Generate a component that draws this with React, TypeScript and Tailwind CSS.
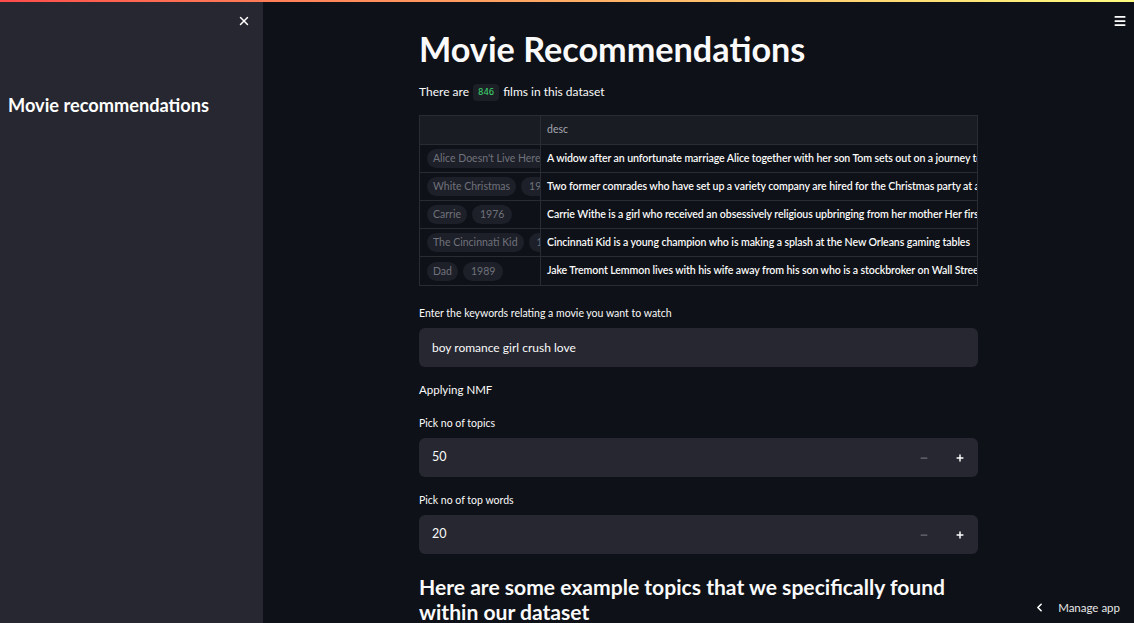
import { X, Menu, ChevronLeft, Minus, Plus } from "lucide-react";

const rows = [
  { title: "Alice Doesn't Live Here Anymore", year: "1974", desc: "A widow after an unfortunate marriage Alice together with her son Tom sets out on a journey to Monterey" },
  { title: "White Christmas", year: "1954", desc: "Two former comrades who have set up a variety company are hired for the Christmas party at a hotel" },
  { title: "Carrie", year: "1976", desc: "Carrie Withe is a girl who received an obsessively religious upbringing from her mother Her first period" },
  { title: "The Cincinnati Kid", year: "1965", desc: "Cincinnati Kid is a young champion who is making a splash at the New Orleans gaming tables" },
  { title: "Dad", year: "1989", desc: "Jake Tremont Lemmon lives with his wife away from his son who is a stockbroker on Wall Street" },
];

const font = { fontFamily: '"Source Sans Pro", Lato, "Noto Sans", sans-serif' };

function NumberInput({ label, value }: { label: string; value: string }) {
  return (
    <div className="mt-[14px]">
      <p className="text-[10.5px] text-[#fafafa] h-[18px] leading-[18px]">{label}</p>
      <div className="mt-[6px] flex h-[39px] rounded-md bg-[#262730]">
        <div className="flex-1 flex items-center px-[13px] text-[12.5px] text-[#fafafa]">{value}</div>
        <div className="w-[36px] flex items-center justify-center text-[#6c6e78]">
          <Minus size={10} strokeWidth={3} />
        </div>
        <div className="w-[36px] flex items-center justify-center text-white">
          <Plus size={10} strokeWidth={3.5} />
        </div>
      </div>
    </div>
  );
}

export default function App() {
  return (
    <div className="h-[623px] w-[1134px] overflow-hidden bg-[#0e1117] text-[#fafafa] flex flex-col" style={font}>
      <div className="h-[2px] w-full bg-gradient-to-r from-[#ff4b4b] to-[#fffd80]" />
      <div className="flex flex-1 min-h-0 relative">
        {/* Sidebar */}
        <aside className="w-[263px] shrink-0 bg-[#262730] relative">
          <X className="absolute left-[237px] top-[12px] text-white" size={14} strokeWidth={2.5} />
          <h2 className="mt-[90px] ml-[8px] text-[18.2px] font-bold text-white leading-[26px]">Movie recommendations</h2>
        </aside>

        {/* Main */}
        <main className="flex-1 flex justify-center relative">
          <Menu className="absolute right-[7px] top-[12px] text-white" size={14} strokeWidth={3} />
          <div className="w-[559px] pt-[25px]">
            <h1 className="text-[34.2px] font-bold leading-[44px]">Movie Recommendations</h1>
            <p className="mt-[11px] h-[20px] text-[12px] leading-[20px] flex items-center">
              There are
              <code className="mx-[4px] px-[5px] h-[17px] leading-[17px] rounded bg-[#1c1f26] text-[#3dd56d] text-[9px]" style={{ fontFamily: '"DejaVu Sans Mono", monospace' }}>846</code>
              films in this dataset
            </p>

            {/* Table */}
            <div className="mt-[13px] border border-[#2a2c34]">
              <div className="flex h-[29px] bg-[#1a1c23] border-b border-[#2a2c34]">
                <div className="w-[121px] shrink-0 border-r border-[#2a2c34]" />
                <div className="flex-1 flex items-center px-[6px] text-[#a3a6ae] text-[10.5px]">desc</div>
              </div>
              {rows.map((r, i) => (
                <div key={r.title} className={`flex h-[28px] ${i < rows.length - 1 ? "border-b border-[#2a2c34]" : ""}`}>
                  <div className="w-[121px] shrink-0 border-r border-[#2a2c34] overflow-hidden flex items-center gap-[5px] pl-[7px] whitespace-nowrap">
                    <span className="px-[6px] h-[19px] leading-[19px] rounded-full bg-[#1e2029] text-[#6f727b] text-[10.5px]">{r.title}</span>
                    <span className="px-[8px] h-[19px] leading-[19px] rounded-full bg-[#1e2029] text-[#6f727b] text-[10.5px]">{r.year}</span>
                  </div>
                  <div className="flex-1 overflow-hidden whitespace-nowrap flex items-center px-[6px] font-semibold text-[10.6px] tracking-[-0.1px] text-[#fafafa]">
                    {r.desc}
                  </div>
                </div>
              ))}
            </div>

            <p className="mt-[18px] text-[10.5px] h-[18px] leading-[18px]">Enter the keywords relating a movie you want to watch</p>
            <div className="mt-[6px] h-[39px] rounded-md bg-[#262730] flex items-center px-[13px] text-[12px]">boy romance girl crush love</div>

            <p className="mt-[13px] h-[20px] text-[11.5px] leading-[20px]">Applying NMF</p>

            <NumberInput label="Pick no of topics" value="50" />
            <NumberInput label="Pick no of top words" value="20" />

            <h2 className="mt-[20px] text-[21.1px] font-bold leading-[25px]">
              Here are some example topics that we specifically found within our dataset
            </h2>
          </div>
          <div className="absolute right-[14px] bottom-[7px] flex items-center gap-[12px] text-[11.5px] text-[#e6e6e6]">
            <ChevronLeft size={13} strokeWidth={3} className="text-white" />
            Manage app
          </div>
        </main>
      </div>
    </div>
  );
}
